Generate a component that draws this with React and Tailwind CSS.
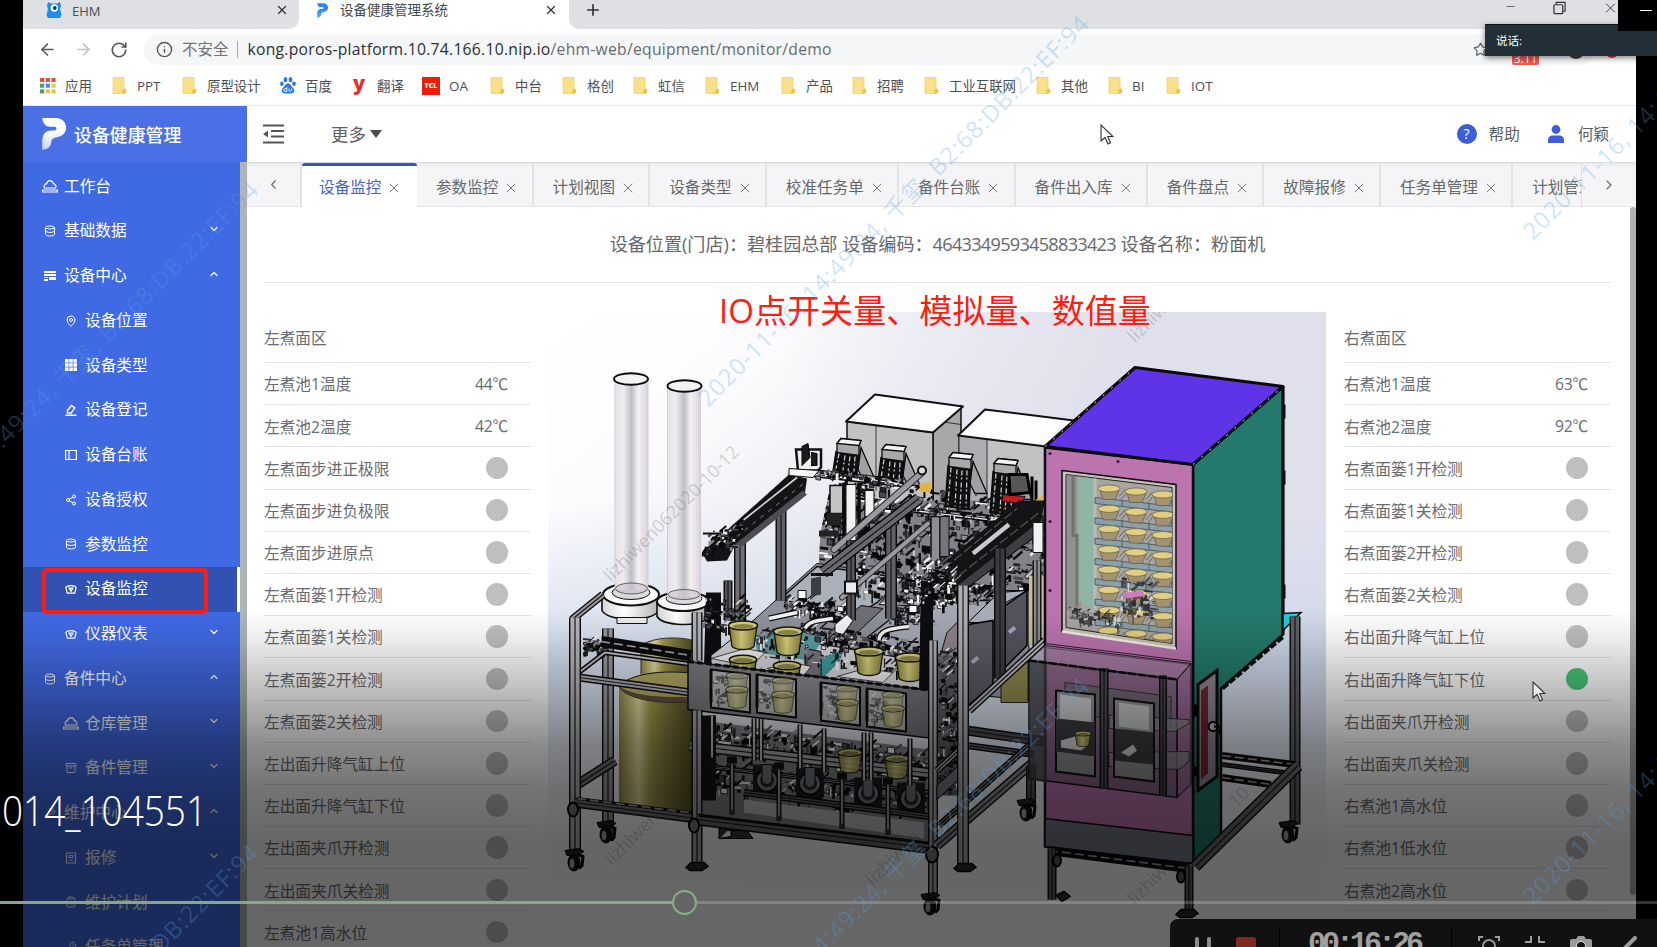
import React from "react";
import {
  ArrowLeft, ArrowRight, RotateCw, Info, X, Plus, Minus, Star, ChevronLeft, ChevronRight,
  ChevronDown, ChevronUp, MapPin, Database, Share2, Archive, ClipboardList, Wrench,
} from "lucide-react";

const SANS = "font-['Open_Sans','Noto_Sans_CJK_SC',sans-serif]";

function Logo({ className, id, from, to }) {
  return (
    <svg viewBox="0 0 24 32" className={className}>
      <defs>
        <linearGradient id={id} x1="0" y1="0" x2="0" y2="1">
          <stop offset="0.4" stopColor={from} />
          <stop offset="1" stopColor={to} />
        </linearGradient>
      </defs>
      <path fill={`url(#${id})`} d="M0.3 0H14a9.6 9.6 0 0 1 1 19.2c-4 .6-5.6 2.4-5.8 5.4C9 29 5 31.500 .3 32V23.500C.3 15.500 4 12.800 9.500 12.500h3c2.600 0 2.600-3.700 0-3.700H8C3.500 8.800 .8 5 .3 0z" />
    </svg>
  );
}

const Folder = () => (
  <svg viewBox="0 0 15 17" className="w-[15px] h-[17px] shrink-0">
    <path d="M1 0.500h11v10.500c2.500 1 2.500 4 .5 5.500H1z" fill="#fbe08a" stroke="#f3d06c" strokeWidth=".8" />
    <path d="M10.500 16.500c-1-2 0-4.500 1.800-4.500s2.400 3 .7 4.500z" fill="#eec04c" />
  </svg>
);
const Apps = () => (
  <svg viewBox="0 0 16 16" className="w-[16px] h-[16px] shrink-0">
    {["#e0523f", "#e0523f", "#e0523f", "#4e9e63", "#4b86e8", "#efc04a", "#4e9e63", "#efc04a", "#efc04a"].map((c, i) => (
      <rect key={i} x={(i % 3) * 5.700} y={Math.floor(i / 3) * 5.700} width="4.200" height="4" fill={c} />
    ))}
  </svg>
);
const Paw = () => (
  <svg viewBox="0 0 16 17" className="w-[16px] h-[17px] shrink-0" fill="#2b78e0">
    <ellipse cx="5.500" cy="2.700" rx="1.900" ry="2.600" />
    <ellipse cx="10.500" cy="2.700" rx="1.900" ry="2.600" />
    <ellipse cx="1.900" cy="6.800" rx="1.800" ry="2.300" />
    <ellipse cx="14" cy="6.800" rx="1.800" ry="2.300" />
    <path d="M8 6.500c2.500 0 3 2.500 4.800 4 2.500 2.500 1.500 6-1.800 6H5c-3.300 0-4.300-3.500-1.800-6C5 9 5.500 6.500 8 6.500z" />
    <path d="M6.800 10v4.500H5.200a1.300 1.300 0 1 1 0-2.800h1.600M9 11.500v2c0 1 2.500 1 2.500 0v-2" stroke="#fff" strokeWidth=".9" fill="none" />
  </svg>
);
const YIcon = () => <span className="w-[12px] -mt-[5px] text-center text-[20px] leading-[14px] font-black text-[#e0332c]">y</span>;
const Tcl = () => <span className="w-[18px] h-[18px] shrink-0 bg-[#f41b05] text-white text-[7px] font-black leading-[18px] text-center">TCL</span>;

const bookmarks = [
  ["应用", Apps, "w-[72px] gap-[9px]"], ["PPT", Folder, "w-[70px] gap-[10px]"], ["原型设计", Folder, "w-[98px] gap-[10px]"],
  ["百度", Paw, "w-[73px] gap-[9px]"], ["翻译", YIcon, "w-[69px] gap-[12px]"], ["OA", Tcl, "w-[68px] gap-[9px]"],
  ["中台", Folder, "w-[72px] gap-[10px]"], ["格创", Folder, "w-[71px] gap-[10px]"], ["虹信", Folder, "w-[72px] gap-[10px]"],
  ["EHM", Folder, "w-[76px] gap-[10px]"], ["产品", Folder, "w-[71px] gap-[10px]"], ["招聘", Folder, "w-[72px] gap-[10px]"],
  ["工业互联网", Folder, "w-[112px] gap-[10px]"], ["其他", Folder, "w-[72px] gap-[10px]"], ["BI", Folder, "w-[58px] gap-[9px]"],
  ["IOT", Folder, "w-[60px] gap-[10px]"],
];

function BrowserChrome() {
  return (
    <>
      <div className="flex h-[29px] bg-white shrink-0">
        <div className="w-[276px] bg-[#dfe0e4] rounded-br-[10px] flex items-start pl-[23px] pt-[2px]">
          <svg viewBox="0 0 16 16" className="w-[16px] h-[16px]">
            <path d="M2 0l3 1.500h6L14 0l1 4-1 3 1.500 6L14 16H2L.5 13 2 7 1 4z" fill="#1b8df0" />
            <circle cx="8.300" cy="6" r="3.700" fill="#fff" /><circle cx="8.800" cy="6" r="1.900" fill="#123a6b" />
          </svg>
          <span className="ml-[10px] text-[13px] leading-[18px] text-[#4a4d52]">EHM</span>
          <X className="ml-auto mr-[10px] mt-[1px] w-[14px] h-[14px] text-[#333]" strokeWidth={2.200} />
        </div>
        <div className="w-[270px] flex items-start pl-[18px]">
          <Logo id="tabLogo" from="#2f86ee" to="#56b2f5" className="w-[11px] h-[15px] mt-[3px]" />
          <span className="ml-[12px] text-[13.500px] leading-[21px] text-[#45484d]">设备健康管理系统</span>
          <X className="ml-auto mr-[11px] mt-[3px] w-[14px] h-[14px] text-[#333]" strokeWidth={2.200} />
        </div>
        <div className="flex-1 bg-[#dfe0e4] rounded-bl-[10px] flex items-start pl-[15px]">
          <Plus className="w-[18px] h-[18px] mt-[1px] text-[#333]" strokeWidth={2.200} />
          <Minus className="ml-auto w-[13px] h-[13px] text-[#555]" strokeWidth={1.500} />
          <svg viewBox="0 0 14 14" className="w-[13px] h-[14px] ml-[36px] mt-[1px]" fill="none" stroke="#333" strokeWidth="1.300">
            <rect x="1" y="3.500" width="9.500" height="9.500" rx="1" /><path d="M3.500 3V1H13v9.500h-2" />
          </svg>
          <X className="ml-[36px] mr-[17px] w-[17px] h-[16px] text-[#333]" strokeWidth={1.400} />
        </div>
      </div>
      <div className="flex items-center h-[41px] shrink-0 text-[#55585c]">
        <ArrowLeft className="ml-[15px] w-[19px] h-[19px]" strokeWidth={2} />
        <ArrowRight className="ml-[17px] w-[19px] h-[19px] text-[#c0c0c2]" strokeWidth={2} />
        <RotateCw className="ml-[17px] w-[18px] h-[18px]" strokeWidth={2.200} />
        <div className="ml-[16px] w-[1450px] h-[31px] rounded-full bg-[#f5f6f7] flex items-center pl-[12px]">
          <Info className="w-[17px] h-[17px]" strokeWidth={2} />
          <span className="ml-[9px] text-[15.500px] text-[#707377]">不安全</span>
          <span className="ml-[8px] w-px h-[17px] bg-[#aaa]" />
          <span className="ml-[10px] text-[15.700px] tracking-[0.260px] text-[#2c2f33] whitespace-nowrap">
            kong.poros-platform.10.74.166.10.nip.io<span className="text-[#686b70]">/ehm-web/equipment/monitor/demo</span>
          </span>
          <Star className="ml-auto mr-[106px] w-[15px] h-[15px]" strokeWidth={1.800} />
        </div>
      </div>
      <div className="flex items-center h-[36px] shrink-0 pl-[17px] pb-[3px] border-b border-[#e8e9eb]">
        {bookmarks.map(([t, Icon, cls]) => (
          <div key={t} className={`flex items-center shrink-0 whitespace-nowrap text-[13.400px] text-[#4c4f54] ${cls}`}><Icon />{t}</div>
        ))}
      </div>
    </>
  );
}

const sv = { fill: "none", stroke: "currentColor", strokeWidth: 1.200 };
const Bell = ({ className }) => (
  <svg viewBox="0 0 16 14" className={className} {...sv}><path d="M2.500 9C1 7 3 5 4.700 4.700 5.500 .5 10.500 .5 11.300 4.700 13 5 15 7 13.500 9zM.7 11h14.600v2H.7z" /></svg>
);
const Card = ({ className }) => (
  <svg viewBox="0 0 12 10" className={className} fill="currentColor"><path d="M0 0h12v2H0zM0 3h12v2H0zM0 6h4v1H0zM5 6h7v3H5zM0 8h4v2H0z" /></svg>
);
const GridI = ({ className }) => (
  <svg viewBox="0 0 12 12" className={className} fill="currentColor">
    {[0, 1, 2].map((r) => [0, 1, 2].map((c) => <rect key={r + "" + c} x={c * 4.200} y={r * 4.200} width="3.600" height="3.600" />))}
  </svg>
);
const Pen = ({ className }) => (
  <svg viewBox="0 0 12 12" className={className} {...sv} strokeWidth="1.400"><path d="M2.500 6.500L6.500 1.500l3.300 2.500-3.600 5H2.500zM.5 11.200h11" /></svg>
);
const Ledger = ({ className }) => (
  <svg viewBox="0 0 12 11" className={className} {...sv}><path d="M.6 1h10.800v9H.6zM4 1v9" /></svg>
);
const Meter = ({ className }) => (
  <svg viewBox="0 0 13 12" className={className} {...sv} strokeWidth="1.400"><path d="M1 4.500L2.500 10.500h8L12 4.500C11.500 1.500 1.500 1.500 1 4.500zM4.500 5h4L6.500 8.500z" /></svg>
);
const Doc = ({ className }) => (
  <svg viewBox="0 0 11 12" className={className} {...sv}><path d="M1 1h9v10H1zM3.500 3.500h4v2h-4zM3.500 8h4" /></svg>
);

const menu = [
  ["工作台", Bell, 0], ["基础数据", Database, 0, "d"], ["设备中心", Card, 0, "u"],
  ["设备位置", MapPin, 1], ["设备类型", GridI, 1], ["设备登记", Pen, 1], ["设备台账", Ledger, 1],
  ["设备授权", Share2, 1], ["参数监控", Database, 1], ["设备监控", Meter, 1, "", true],
  ["仪器仪表", Meter, 1, "d"], ["备件中心", Database, 0, "u"], ["仓库管理", Bell, 1, "d"],
  ["备件管理", Archive, 1, "d"], ["维护中心", Wrench, 0, "u"], ["报修", Doc, 1, "d"],
  ["维护计划", ClipboardList, 1], ["任务单管理", Wrench, 1],
];

function Sidebar() {
  return (
    <aside className="w-[224px] shrink-0 flex flex-col text-white">
      <div className="h-[56px] shrink-0 bg-[#4b70e6] flex items-center pl-[19px]">
        <Logo id="sideLogo" from="#ffffff" to="#c3d2fa" className="w-[24px] h-[32px]" />
        <span className="ml-[8px] mt-[3px] text-[17.900px] font-medium whitespace-nowrap">设备健康管理</span>
      </div>
      <div className="flex flex-1 min-h-0">
        <nav className="w-[217px] bg-[#4069e4] overflow-hidden pt-[2px]">
          {menu.map(([t, Icon, lvl, chev, on], i) => (
            <div key={i} className={`h-[44.750px] flex items-center pr-[20px] ${lvl ? "pl-[41px]" : "pl-[20px]"} ${on ? "bg-[#3252b3] border-r-[3px] border-white" : ""}`}>
              <span className="w-[14px] flex justify-center shrink-0">
                <Icon className={Icon === Bell ? "w-[16px] h-[14px] shrink-0" : "w-[12px] h-[12px]"} />
              </span>
              <span className="ml-[7px] text-[15.700px] whitespace-nowrap leading-none">{t}</span>
              {chev === "d" && <ChevronDown className="ml-auto w-[12px] h-[12px] -mt-[4px]" strokeWidth={2.500} />}
              {chev === "u" && <ChevronUp className="ml-auto w-[12px] h-[12px] -mt-[3px]" strokeWidth={2.500} />}
            </div>
          ))}
        </nav>
        <div className="w-[7px] bg-[#b1b3b4]" />
      </div>
    </aside>
  );
}

const tabs = [
  ["参数监控", "w-[116.600px]"], ["计划视图", "w-[116.600px]"], ["设备类型", "w-[116.600px]"], ["校准任务单", "w-[132.200px]"],
  ["备件台账", "w-[116.600px]"], ["备件出入库", "w-[132.200px]"], ["备件盘点", "w-[116.600px]"], ["故障报修", "w-[116.600px]"],
  ["任务单管理", "w-[132.200px]"], ["计划管理", "w-[116.600px]"],
];

function Header() {
  return (
    <>
      <div className="h-[56px] shrink-0 flex items-center pr-[27px] text-[#5d5f63]">
        <svg viewBox="0 0 22 20" className="ml-[16px] w-[22px] h-[20px]" fill="none" stroke="#555" strokeWidth="1.900">
          <path d="M0 1.500h21M8 7h13M8 12.500h13M0 18.500h21" /><path d="M0 10l5-3.500v7z" fill="#555" stroke="none" />
        </svg>
        <span className="ml-[46px] mt-[1px] text-[17.500px]">更多</span>
        <svg viewBox="0 0 12 8" className="ml-[4px] w-[12px] h-[8px]"><path d="M0 0h12L6 8z" fill="#4c4e52" /></svg>
        <span className="ml-auto w-[20px] h-[20px] rounded-full bg-[#3b5fdc] text-white text-[14px] leading-[20px] text-center">?</span>
        <span className="ml-[12px] mt-[1px] text-[15.600px]">帮助</span>
        <svg viewBox="0 0 16 18" className="ml-[28px] w-[16px] h-[18px]" fill="#3b5fdc"><circle cx="8" cy="4.500" r="4.400" /><path d="M0 18v-3c0-3 2-4.500 4.500-4.500h7C14 10.500 16 12 16 15v3z" /></svg>
        <span className="ml-[14px] mt-[1px] text-[15.600px]">何颖</span>
      </div>
      <div className="h-[45px] shrink-0 flex bg-[#f5f5f7] border-t border-[#dcdde0] text-[15.600px] text-[#66686c] shadow-[inset_0_2px_3px_rgba(0,0,0,0.050)]">
        <div className="w-[55px] border-r-2 border-b border-[#e2e3e6] flex items-center justify-center"><ChevronLeft className="w-[15px] h-[15px]" strokeWidth={1.700} /></div>
        <div className="flex w-[1280px] overflow-hidden border-r border-[#dcdde0]">
          <div className="w-[115px] shrink-0 bg-white border-t-[3px] border-[#3655c4] rounded-t-[3px] flex items-center pl-[17px] pt-[2px] text-[#4361cf]">
            设备监控<X className="ml-[5px] mt-[1px] w-[16px] h-[16px] text-[#77797c]" strokeWidth={1.500} />
          </div>
          {tabs.map(([t, w]) => (
            <div key={t} className={`shrink-0 flex items-center pl-[19px] pt-[6px] border-r-2 border-b border-[#e2e3e6] whitespace-nowrap ${w}`}>
              {t}<X className="ml-[5px] mt-[1px] w-[16px] h-[16px] text-[#77797c] shrink-0" strokeWidth={1.500} />
            </div>
          ))}
        </div>
        <div className="flex-1 border-b border-[#e2e3e6] flex items-center justify-center"><ChevronRight className="w-[16px] h-[16px]" strokeWidth={1.700} /></div>
      </div>
    </>
  );
}

const left = [
  ["左煮池1温度", "44℃"], ["左煮池2温度", "42℃"], ["左煮面步进正极限"], ["左煮面步进负极限"], ["左煮面步进原点"],
  ["左煮面篓1开检测"], ["左煮面篓1关检测"], ["左煮面篓2开检测"], ["左煮面篓2关检测"], ["左出面升降气缸上位"],
  ["左出面升降气缸下位"], ["左出面夹爪开检测"], ["左出面夹爪关检测"], ["左煮池1高水位"],
];
const right = [
  ["右煮池1温度", "63℃"], ["右煮池2温度", "92℃"], ["右煮面篓1开检测"], ["右煮面篓1关检测"], ["右煮面篓2开检测"],
  ["右煮面篓2关检测"], ["右出面升降气缸上位"], ["右出面升降气缸下位", null, true], ["右出面夹爪开检测"], ["右出面夹爪关检测"],
  ["右煮池1高水位"], ["右煮池1低水位"], ["右煮池2高水位"],
];

function Points({ title, rows }) {
  return (
    <section className="w-[267px] shrink-0 text-[15.700px] text-[#696b70]">
      <div className="h-[80px] pt-[33px] flex items-center border-b border-[#e3e4e7]">{title}</div>
      {rows.map(([t, v, on]) => (
        <div key={t} className="h-[42.190px] flex items-center justify-between pr-[23px] border-b border-[#e3e4e7]">
          <span className="mt-[3px]">{t}</span>
          {v ? <span className="mt-[2px] tracking-[-0.200px]">{v}</span> : <span className={`w-[22.500px] h-[22.500px] rounded-full ${on ? "bg-[#47c878]" : "bg-[#bfbfbf]"}`} />}
        </div>
      ))}
    </section>
  );
}

/* ---------- machine drawing ---------- */
const SHADES = ["#0a0a0c", "#0a0a0c", "#0a0a0c", "#26262a", "#47474d", "#8c8c93", "#f2f2f4"];
function makeRand(seed) {
  let s = seed;
  return () => {
    s = (s * 16807) % 2147483647;
    return s / 2147483647;
  };
}
// Small mechanical parts scattered in a sheared region with origin (x, y), width w, height h and slope k.
function Parts({ x, y, w, h, k = 0.130, n, seed, size = 7 }) {
  const r = makeRand(seed);
  const out = [];
  for (let i = 0; i < n; i++) {
    const dx = r() * w;
    const px = x + dx;
    const py = y + dx * k + r() * h;
    const kind = Math.floor(r() * 4);
    const L = 2 + r() * size;
    const c = SHADES[Math.floor(r() * SHADES.length)];
    if (kind === 0) out.push(<path key={i} d={`M${px} ${py}l${L} ${L * 0.130}`} stroke={c} strokeWidth={1 + r() * 2} />);
    else if (kind === 1) out.push(<path key={i} d={`M${px} ${py}l${L * 0.800} ${-L * 0.700}`} stroke={c} strokeWidth={1 + r() * 1.600} />);
    else if (kind === 2) out.push(<path key={i} d={`M${px} ${py}v${L}`} stroke={c} strokeWidth={1 + r() * 2} />);
    else out.push(<path key={i} d={`M${px} ${py}l${L * 0.600} ${L * 0.080}v${L * 0.500}l${-L * 0.600} ${-L * 0.080}z`} fill={c} stroke="#0a0a0c" strokeWidth=".8" />);
  }
  return <g fill="none">{out}</g>;
}
// Extruded bar: black outline, coloured core and a thin dark seam.
function Bar({ p, w = 8, c = "#85858b", seam = true }) {
  return (
    <g fill="none" strokeLinejoin="round">
      <path d={p} stroke="#0a0a0c" strokeWidth={w} />
      <path d={p} stroke={c} strokeWidth={w - 2.800} />
      {seam && <path d={p} stroke="#19191c" strokeWidth="1.200" />}
    </g>
  );
}
function Rod({ p, w = 6, c = "#9a9aa0" }) {
  return (
    <g fill="none" strokeLinecap="round">
      <path d={p} stroke="#2a2a2d" strokeWidth={w} />
      <path d={p} stroke={c} strokeWidth={w - 2} />
    </g>
  );
}
function Chain({ p, w = 8 }) {
  return (
    <g fill="none">
      <path d={p} stroke="#0a0a0c" strokeWidth={w} />
      <path d={p} stroke="#a2a2a8" strokeWidth="1.600" strokeDasharray="9 4" />
    </g>
  );
}
function Caster({ x, y }) {
  return (
    <g>
      <path d={`M${x - 9} ${y - 12}l14 -2 5 3-8 4h-9z`} fill="#222" stroke="#000" />
      <ellipse cx={x} cy={y} rx="6.500" ry="9" fill="#0c0c0e" />
      <ellipse cx={x - 2} cy={y + 1} rx="2.800" ry="5" fill="#aaa" stroke="#222" />
      <path d={`M${x + 4} ${y - 8}l5 2-1 9-3 3`} fill="none" stroke="#000" strokeWidth="3" />
    </g>
  );
}
function Foot({ x, y }) {
  return <path d={`M${x - 10} ${y}l5-5h13l4 4-6 4h-12z`} fill="#2a2a2e" stroke="#000" strokeWidth="1.500" />;
}
function Cup({ x, y, s = 1, o = 1 }) {
  return (
    <g transform={`translate(${x} ${y}) scale(${s})`} opacity={o}>
      <path d="M-14 0L-11 21C-6 25 6 25 11 21L14 0z" fill="url(#cup)" stroke="#15150a" strokeWidth="1.300" />
      <ellipse rx="14.500" ry="4.500" fill="#d5cf84" stroke="#15150a" strokeWidth="1.500" />
      <ellipse cy="1" rx="10.500" ry="2.600" fill="#8f8948" />
    </g>
  );
}
// Dispensing head: light cap over a black mesh body with a rear gusset.
function Head({ x, y, h = 26 }) {
  const b = y + 14 + h;
  return (
    <g stroke="#0a0a0c" strokeWidth="1.300">
      <path d={`M${x + 24} ${y + 8}L${x + 38} ${y + 40}h-12l-5-10z`} fill="#a2a0a5" />
      <path d={`M${x - 1} ${y + 12}L${x + 22} ${y + 14}L${x + 20} ${b}L${x - 4} ${b - 3}z`} fill="#101012" />
      <path d={`M${x} ${y + 4}l4-5 20 2-2 5v10l-22-3z`} fill="#a9a9ac" />
      <path d={`M${x} ${y + 4}l4-5 20 2-2 5z`} fill="#f4f4f5" />
      <path d={`M${x + 2} ${y + 14}L${x - 1} ${b - 5}M${x + 8} ${y + 16}L${x + 6} ${b - 3}M${x + 13} ${y + 17}L${x + 11} ${b - 2}M${x + 18} ${y + 17}L${x + 17} ${b - 2}`} fill="none" stroke="#c9c9cc" strokeWidth="1.300" strokeDasharray="5 2 2 3" />
    </g>
  );
}

const shelfRows = [0, 1, 2, 3, 4, 5, 6, 7];

function Machine() {
  return (
    <svg viewBox="549 311.500 778 640" className="w-[778px] h-[640px] ml-[17px] mr-[18px] mt-[29px] shrink-0" strokeLinecap="butt">
      <defs>
        <linearGradient id="bg" x1="0" y1="0" x2="0.900" y2="0.900">
          <stop offset="0" stopColor="#ffffff" /><stop offset="0.200" stopColor="#fbfbfd" />
          <stop offset="0.450" stopColor="#e3e6ee" /><stop offset="1" stopColor="#d9dce8" />
        </linearGradient>
        <linearGradient id="low" x1="0" y1="0" x2="0" y2="1">
          <stop offset="0.300" stopColor="#c4d2e8" stopOpacity="0" /><stop offset="0.550" stopColor="#c4d2e8" stopOpacity="0.600" />
          <stop offset="0.800" stopColor="#ffffff" stopOpacity="0.900" /><stop offset="1" stopColor="#ffffff" />
        </linearGradient>
        <linearGradient id="tr" x1="0" y1="0" x2="1" y2="0">
          <stop offset="0.300" stopColor="#e0e0ec" stopOpacity="0" /><stop offset="0.800" stopColor="#e0e0ec" />
        </linearGradient>
        <linearGradient id="tube" x1="0" y1="0" x2="1" y2="0">
          <stop offset="0" stopColor="#e7e2e8" /><stop offset="0.250" stopColor="#efedf0" /><stop offset="0.500" stopColor="#bfbfc3" />
          <stop offset="0.700" stopColor="#f2f2f4" /><stop offset="1" stopColor="#dcd2dc" />
        </linearGradient>
        <linearGradient id="drum" x1="0" y1="0" x2="1" y2="0">
          <stop offset="0" stopColor="#8f8744" /><stop offset="0.260" stopColor="#e2dba0" /><stop offset="0.420" stopColor="#a49c4c" />
          <stop offset="0.600" stopColor="#857d3e" /><stop offset="1" stopColor="#4e4a22" />
        </linearGradient>
        <linearGradient id="cup" x1="0" y1="0" x2="1" y2="0">
          <stop offset="0" stopColor="#857f3a" /><stop offset="0.450" stopColor="#d8d07c" /><stop offset="1" stopColor="#847d38" />
        </linearGradient>
        <linearGradient id="bowl" x1="0" y1="0" x2="1" y2="0">
          <stop offset="0" stopColor="#d6d6d8" /><stop offset="0.400" stopColor="#ffffff" /><stop offset="1" stopColor="#b4b4b8" />
        </linearGradient>
        <linearGradient id="panel" x1="0" y1="0" x2="1" y2="0">
          <stop offset="0" stopColor="#76767c" /><stop offset="0.500" stopColor="#88888e" /><stop offset="1" stopColor="#6e6e76" />
        </linearGradient>
        <clipPath id="rear"><path d="M833 478L905 483 1046 505V610L960 612 870 600 818 572 822 530z" /></clipPath>
        <clipPath id="deck"><path d="M720 650L752 618 818 562 1030 590V700L936 690z" /></clipPath>
      </defs>
      <rect x="549" y="311" width="778" height="641" fill="url(#bg)" />
      <rect x="549" y="311" width="778" height="300" fill="url(#tr)" />
      <rect x="549" y="311" width="778" height="641" fill="url(#low)" />

      {/* rear covers */}
      <g stroke="#111" strokeWidth="1.500" strokeLinejoin="round">
        <path d="M934 432L962 405V520H934z" fill="#a9a7aa" />
        <path d="M848 421L934 432V520L848 490z" fill="#c2c2c3" />
        <path d="M877 425V490M934 420l28 4" strokeWidth=".8" />
        <path d="M876 394L964 406 934 432 847 421z" fill="#fdfdfd" strokeWidth="2" />
        <path d="M960 434L1047 446V560L960 540z" fill="#c2c2c3" strokeWidth="1" />
        <path d="M960 434l28 4V540l-28-10z" fill="#aeacb0" strokeWidth=".8" />
        <path d="M986 409L1075 420 1047 446 959 435z" fill="#fdfdfd" strokeWidth="2" />
      </g>

      {/* rear equipment */}
      <g clipPath="url(#rear)">
        <path d="M820 500H1046V620H820z" fill="#838288" />
        <Parts x={820} y={478} w={228} h={120} k={0.080} n={900} seed={77} size={11} />
      </g>

      {/* tank deck */}
      <path d="M752 622L818 563 905 575 880 604 930 606 990 590 1030 590V700L936 690 720 655z" fill="#8f929c" stroke="#111" />
      <path d="M782 598L818 566 852 570 905 578 878 602 850 620z" fill="#a9b0ba" stroke="#111" strokeWidth="1.500" />
      <path d="M868 637L915 600 1000 600 965 640 930 660z" fill="#a3a8b4" stroke="#111" strokeWidth="1.500" />
      <path d="M862 605L884 608 850 640 830 632z" fill="#6f6d75" stroke="#111" />
      <g clipPath="url(#deck)">
        <Parts x={785} y={596} w={60} h={18} k={0.100} n={120} seed={301} size={10} />
        <Parts x={852} y={560} w={110} h={34} k={0.100} n={230} seed={31} size={9} />
        <Parts x={890} y={606} w={40} h={16} k={0.050} n={70} seed={33} size={9} />
        <Parts x={930} y={575} w={70} h={30} k={0} n={150} seed={34} size={9} />
        <Parts x={800} y={622} w={130} h={28} k={0.150} n={220} seed={35} size={10} />
        <path d="M812 578l10-2v18l-10 2z" fill="#3b3b42" />
        <path d="M799 590h8v8h-8zM910 605h8v7h-8z" fill="#f6f6f7" stroke="#111" />
      </g>

      <Head x={838} y={439} h={20} />
      <Head x={883} y={445} h={24} />
      <Head x={950} y={453} h={42} />
      <Head x={995} y={459} h={42} />
      <path d="M1004 494l22 2-3 7-20-2z" fill="#c01c24" stroke="#111" />
      <path d="M1010 474h18l3 18-20 2z" fill="#55555a" stroke="#000" strokeWidth="3" />
      <path d="M1033 476v34M1037 480v26" stroke="#000" strokeWidth="3" />
      <path d="M920 484l12-3v10l-10 1zM1036 500l8-6v8z" fill="#e0b545" />

      {/* columns under the beams */}
      <path d="M831 485h13v28h-13z" fill="#c4c4c6" stroke="#111" strokeWidth="1.500" />
      <path d="M828 513h14v12h-14zM820 530h20v6h-20z" fill="#222" />
      <path d="M847 484h10v56h-10zM866 490h9v26h-9z" fill="#f2f2f3" stroke="#111" />
      <path d="M860 482v58M845 482v56" stroke="#0b0b0d" strokeWidth="3.500" />

      {/* cross beams */}
      <Bar p="M790 471L905 484" w={6} c="#f0f0f2" seam={false} />
      <Chain p="M818 471L900 480" w={4} />
      <Bar p="M884 505L1000 519" w={7} c="#ececee" seam={false} />
      <Chain p="M900 506L990 517" w={3} />
      <Parts x={812} y={467} w={95} h={8} n={80} seed={12} size={6} />
      <Parts x={890} y={502} w={110} h={8} n={80} seed={19} size={6} />

      {/* left gantry */}
      <Bar p="M782 506V600" w={11} c="#5e5e64" />
      <Bar p="M741 540V625" w={12} c="#6e6e74" />
      <path d="M703 552L790 474 808 478 806 492 736 545 728 560 708 561z" fill="#141416" />
      <path d="M730 531L798 477" stroke="#d9d9de" strokeWidth="1.600" fill="none" />
      <path d="M738 546L806 492" stroke="#4d4d53" strokeWidth="6" fill="none" />
      <path d="M738 536L806 482" stroke="#85858b" strokeWidth="1" strokeDasharray="4 6" fill="none" />
      <Parts x={706} y={532} w={34} h={22} k={-0.300} n={75} seed={5} size={7} />
      <path d="M704 533h18M704 556c-2-7 8-12 16-10" stroke="#111" strokeWidth="2" fill="none" />
      <path d="M797 449h25v18l-3 3h-20z" fill="#eee" stroke="#111" strokeWidth="2.500" />
      <path d="M803 446l6-3 2 14-8 8zM812 452l6 1v12h-6" fill="#1b1b1e" stroke="#000" />
      <path d="M790 468l30 2-6 7-24-2z" fill="#f6f6f7" stroke="#111" />

      {/* middle gantry */}
      <Rod p="M835 549L923 472" w={7} />
      <circle cx="923" cy="470" r="4" fill="#ddd" stroke="#111" strokeWidth="2" />
      <Bar p="M892 524V618" w={12} c="#5f5f65" />
      <Bar p="M852 540V620" w={10} c="#55555b" />
      <Bar p="M824 572L920 498" w={12} c="#68686e" />
      <path d="M812 574h22" stroke="#111" strokeWidth="3" />
      <Rod p="M843 597L929 523" w={6} />
      <path d="M846 581h12v12h-12z" fill="#ececee" stroke="#111" strokeWidth="2" />
      <path d="M932 516h9v46h-9z" fill="#8f8d93" stroke="#111" strokeWidth="1.500" />
      <path d="M941 516h9v40h-9z" fill="#77727b" stroke="#111" />

      {/* right gantry */}
      <path d="M950 590L1044 515V530L962 592z" fill="#3d3d42" stroke="#000" />
      <path d="M1046 500L1042 520 955 588 926 592 924 577 940 566 1020 500z" fill="#141416" />
      <path d="M974 553L1010 524" stroke="#c9c9cf" strokeWidth="4.500" />
      <path d="M945 568L1018 508M960 575L1040 512" stroke="#55555a" strokeWidth="1.200" strokeDasharray="10 3" />
      <Parts x={915} y={560} w={40} h={28} k={0} n={90} seed={55} size={8} />
      <path d="M1034 522h10v30h-10z" fill="#f2f2f4" stroke="#111" />
      <Rod p="M1028 576L1044 560" w={5} c="#b9b9bd" />

      {/* dark cabinets beside the tanks */}
      <path d="M1030 575h16v70h-16z" fill="#c3bf96" />
      <path d="M969 622L1000 592 1028 590 1000 606 998 622z" fill="#a9adbb" stroke="#000" />
      <path d="M969 624L994 620V684L969 705z" fill="#5b5963" stroke="#000" strokeWidth="1.500" />
      <path d="M1005 606L1028 590V645L1005 668z" fill="#55535d" stroke="#000" strokeWidth="1.500" />
      <path d="M948 632L968 612V640L940 660z" fill="#8c828c" stroke="#111" />
      <Bar p="M1001 548V678" w={12} c="#3c3c40" />
      <Bar p="M1038 560V650" w={9} c="#8a8a8f" />
      <path d="M973 662l6-5M1010 632l6-5" stroke="#a6a6bb" strokeWidth="4" />
      <path d="M1002 684l24-22h3v40h-27z" fill="#8c874c" stroke="#222" />

      {/* tubes */}
      <g>
        <path d="M603 596v14a29 11 0 0 0 57 0v-14z" fill="url(#bowl)" stroke="#111" strokeWidth="1.600" />
        <ellipse cx="632" cy="594" rx="28" ry="11" fill="#fbfbfc" stroke="#111" strokeWidth="2" />
        <ellipse cx="632" cy="592" rx="19" ry="7" fill="#d9d9dc" stroke="#111" />
        <path d="M618 617h30v6h-30z" fill="#ececee" stroke="#111" />
        <rect x="616" y="379" width="33" height="211" fill="url(#tube)" stroke="#cfc2d2" strokeWidth=".8" />
        <ellipse cx="632.500" cy="588" rx="16" ry="5.500" fill="#c9c2cb" fillOpacity=".6" stroke="#444" strokeWidth=".8" />
        <ellipse cx="632" cy="378.500" rx="17" ry="5.800" fill="#f3f3f4" stroke="#0c0c0e" strokeWidth="1.900" />
        <path d="M658 602v14a27 10 0 0 0 48 4v-18z" fill="url(#bowl)" stroke="#111" strokeWidth="1.600" />
        <ellipse cx="684" cy="601" rx="26" ry="9.500" fill="#fbfbfc" stroke="#111" strokeWidth="2" />
        <ellipse cx="685" cy="598" rx="18" ry="6" fill="#d9d9dc" stroke="#111" />
        <rect x="668.500" y="386" width="33" height="211" fill="url(#tube)" stroke="#cfc2d2" strokeWidth=".8" />
        <ellipse cx="685" cy="594" rx="16" ry="5" fill="#c9c2cb" fillOpacity=".6" stroke="#444" strokeWidth=".8" />
        <ellipse cx="685.500" cy="385.500" rx="17" ry="5.800" fill="#f3f3f4" stroke="#0c0c0e" strokeWidth="1.900" />
      </g>

      {/* drums and left frame */}
      <path d="M642 645c12-9 40-9 52-5v70h-52z" fill="url(#drum)" stroke="#333" />
      <Bar p="M609 628V840" w={12} c="#97979c" />
      <path d="M620 686C630 672 665 668 695 674V812L620 802z" fill="url(#drum)" />
      <path d="M620 686c8 14 45 18 75 15v-28c-30-4-65 0-75 13z" fill="#b0a761" stroke="#1a1a10" />
      <path d="M620 686c8 14 45 18 75 15v-5c-40 2-62-2-75-10z" fill="#5e4e3c" />
      <Chain p="M602 641L692 655" w={11} />
      <Parts x={584} y={638} w={22} h={14} n={55} seed={61} size={6} />
      <Bar p="M580 672L606 652 694 664" w={5} c="#b9b9bd" seam={false} />
      <Bar p="M580 677L692 692" w={8} c="#a9a9ae" />
      <Bar p="M573 619L604 594" w={8} c="#9c9ca1" />
      <Bar p="M577 785L616 760" w={10} c="#737378" />
      <Bar p="M576 617V850" w={12} c="#b4b4b9" />
      <Bar p="M575 802L698 818" w={10} c="#6f6f74" />
      <Chain p="M578 798L698 813" w={3} />

      {/* tanks and baskets */}
      <path d="M707 592h15v74h-17z" fill="#0d0d0f" />
      <Bar p="M729 580V620" w={9} c="#55555b" />
      <Parts x={705} y={594} w={42} h={34} n={100} seed={14} size={7} />
      <path d="M712 655l28-22 90 12 70 12 30 6 18 30-30-3-206-25z" fill="#d4d4d9" stroke="#111" />
      <path d="M756 638l20-8 50 6-16 24-52-8z" fill="#5a9da0" />
      <path d="M822 657l22-6-4 10-18 18z" fill="#3d9aa0" stroke="#1d5a60" strokeDasharray="2 2" />
      <path d="M806 648l16 3v26l-16-3z" fill="#77757d" stroke="#111" />
      <Parts x={758} y={628} w={170} h={28} n={190} seed={41} size={8} />
      <path d="M770 618l28-6M806 628c4-8 14-8 28-10M880 640c0-10 10-12 30-14" stroke="#111" strokeWidth="6" fill="none" />
      <path d="M770 618l28-6M806 628c4-8 14-8 28-10M880 640c0-10 10-12 30-14" stroke="#f4f4f6" strokeWidth="3.500" fill="none" />
      <path d="M836 624l12-10 6 6-10 14-8-2z" fill="#f4f4f6" stroke="#111" />
      <path d="M712 658l34-10 20 4-14 14zM768 668l26-6 18 4-8 10zM838 676l28-8 28 4-10 10z" fill="#efeff1" stroke="#222" strokeWidth=".8" />
      <Cup x={744} y={659} s={0.950} />
      <Cup x={788} y={665} s={0.950} />
      <Cup x={744} y={625} />
      <Cup x={789} y={631} />
      <Cup x={870} y={651} />
      <Cup x={911} y={657} />
      <path d="M922 580h12v110h-14z" fill="#0d0d0f" />
      <Parts x={915} y={575} w={20} h={26} k={0} n={50} seed={87} size={7} />
      <path d="M938 655h20v140h-20z" fill="#5c5a62" />
      <Parts x={938} y={650} w={22} h={140} k={0} n={170} seed={88} size={8} />

      {/* lower internals */}
      <path d="M700 712L932 742V845L700 818z" fill="#68686d" opacity=".85" />
      <path d="M702 716L930 745" stroke="#dcdce0" strokeWidth="8" />
      <Parts x={700} y={722} w={232} h={26} n={330} seed={23} size={10} />
      <Bar p="M691 745L933 773" w={11} c="#a4a4a9" />
      <Parts x={700} y={760} w={230} h={28} n={280} seed={27} size={10} />
      <Cup x={851} y={752} s={0.850} o={0.850} />
      <Cup x={898} y={758} s={0.850} o={0.850} />
      <Bar p="M700 765L930 792" w={5} c="#b8b8bc" />
      {[[768, 780], [811, 783], [869, 793], [912, 798]].map(([x, y]) => (
        <g key={x}>
          <rect x={x - 14} y={y - 16} width="28" height="30" fill="#1b1b1e" />
          <circle cx={x} cy={y} r="11" fill="#77787e" stroke="#0c0c0e" strokeWidth="2" />
          <circle cx={x} cy={y} r="7" fill="#2a2b30" />
          <path d={`M${x - 5} ${y - 16}h10v15a5 5 0 0 1-10 0z`} fill="#6b757c" stroke="#111" />
        </g>
      ))}
      <Bar p="M745 792L930 816" w={7} c="#5d5d62" />
      <path d="M745 799L925 822 925 838 745 812z" fill="#bcbcbf" />
      <path d="M703 715h14v85h-14z" fill="#121214" />
      {[[713, 715, 757], [755, 718, 760], [762, 718, 760], [801, 724, 768], [825, 728, 772], [865, 732, 780], [872, 732, 780], [911, 738, 785]].map(([x, a, b]) => (
        <Bar key={x} p={`M${x} ${a}V${b}`} w={5} c="#b9b9bd" seam={false} />
      ))}
      {[[733, 756, 812], [780, 762, 818], [843, 772, 826], [889, 777, 832]].map(([x, a, b]) => (
        <g key={x}>
          <Bar p={`M${x} ${a}V${b}`} w={5} c="#98989d" seam={false} />
          <path d={`M${x - 5} ${a}h10v7h-10z`} fill="#111" />
          <circle cx={x} cy={b} r="3" fill="#333" />
        </g>
      ))}
      <path d="M720 822l12-2v16l-12 2zM720 838h34l-6-8h-20z" fill="#38383c" stroke="#000" />

      {/* front panel */}
      <path d="M689 661L934 690V738L689 709z" fill="url(#panel)" stroke="#0c0c0e" strokeWidth="1.500" />
      {[[712, 669], [758, 674], [822, 682], [868, 688]].map(([x, y], i) => (
        <g key={x}>
          <path d={`M${x} ${y}l39 5v38l-39-5z`} fill="#b1b1b0" stroke="#0c0c0e" strokeWidth="2" />
          <g opacity=".55"><Parts x={x + 2} y={y + 4} w={14} h={28} n={26} seed={200 + i} size={5} /></g>
          <Cup x={x + 26} y={y + 6} s={0.750} o={0.450} />
          <Cup x={x + 26} y={y + 20} s={0.780} o={0.600} />
          <path d={`M${x} ${y}v33`} stroke="#0c0c0e" strokeWidth="3" />
        </g>
      ))}
      <path d="M689 661L934 690" stroke="#0c0c0e" strokeWidth="3" strokeDasharray="6 3" />

      {/* front frame */}
      <Bar p="M698 612V660" w={11} c="#b2b2b7" />
      <Bar p="M698 710V862" w={11} c="#a3a3a8" />
      <Bar p="M698 819L935 848" w={12} c="#66666b" />
      <path d="M700 815L933 843" stroke="#0c0c0e" strokeWidth="2.500" />
      <Bar p="M934 640V895" w={10} c="#b0b0b5" />
      <Foot x={697} y={867} />

      {/* side frame */}
      <Bar p="M938 770L965 745" w={7} c="#b9b9bd" />
      <path d="M938 785l28-26v14l-28 26z" fill="#7b7880" stroke="#000" />
      <Bar p="M968 730L1045 741" w={10} c="#4d4d52" />
      <Bar p="M968 745L1035 754" w={7} c="#5d5d62" />
      <Bar p="M970 710L1046 640" w={8} c="#b9b9bd" />
      <Bar p="M938 845L1034 762" w={10} c="#8c8c91" />
      <Bar p="M940 825L1030 745" w={7} c="#77777c" />
      <Bar p="M964 585V865" w={12} c="#adadb2" />
      <Foot x={965} y={868} />
      <Bar p="M1032 765V805" w={10} c="#55555a" />

      {/* noodle cabinet */}
      <g stroke="#0b0b0d" strokeLinejoin="round">
        <path d="M1194 464L1284 386V634L1222 688V840L1194 863z" fill="#23796b" strokeWidth="2.500" />
        <path d="M1046 447L1194 464V863L1046 846z" fill="#bb74ae" strokeWidth="2.500" />
        <path d="M1046 818L1194 835V863L1046 846z" fill="#757987" strokeWidth="1.500" />
        <path d="M1136 367L1284 386 1194 464 1046 446z" fill="#5f33e6" strokeWidth="3" />
      </g>
      <path d="M1284 386V634M1285 404v14M1285 470v14M1285 584v14" stroke="#0b0b0d" strokeWidth="3" />
      <path d="M1194 464L1284 386M1046 446L1136 367" stroke="#f5f5f8" strokeWidth="1" strokeDasharray="2 9" />
      {[[1051, 453], [1119, 461], [1051, 521], [1051, 590]].map(([x, y]) => <circle key={y} cx={x} cy={y} r="1.500" fill="#3d1038" />)}
      <path d="M1063 470L1177 484V648L1063 631z" fill="#c7c3bb" stroke="#0b0b0d" strokeWidth="1.500" />
      <path d="M1067 474L1173 487V643L1067 627z" fill="#a8a6a2" stroke="#222" />
      <path d="M1068 475L1078 476V612L1068 610z" fill="#8f918f" />
      <path d="M1080 476L1094 478V608L1080 602z" fill="#8fb5a5" />
      <path d="M1074 475v60h4v72" stroke="#70736f" strokeWidth="3" fill="none" />
      <path d="M1096 478v132" stroke="#bdbbb5" strokeWidth="3" />
      <clipPath id="win"><path d="M1067 474L1173 487V643L1067 627z" /></clipPath>
      <g clipPath="url(#win)">
        {shelfRows.map((r) =>
          [0, 1, 2].map((c) => {
            const x = 1110 + c * 27;
            const y = 488 + r * 20.300 + c * 3;
            return (
              <g key={r + "-" + c}>
                <path d={`M${x - 14} ${y + 9}l28 3v6l-28-3z`} fill="#8ba0a8" stroke="#4c585e" strokeWidth=".9" />
                <path d={`M${x - 9} ${y + 2}l3 9h12l4-9z`} fill="#a39273" stroke="#66604f" strokeWidth=".8" />
                <ellipse cx={x} cy={y} rx="11" ry="3.600" fill="#e3cf84" stroke="#77704c" strokeWidth=".9" />
                <path d={`M${x + 10} ${y + 8}l6-7M${x + 12} ${y + 11}l5-6`} stroke="#5f686c" strokeWidth="1" />
              </g>
            );
          })
        )}
        <g opacity=".7"><Parts x={1122} y={578} w={32} h={38} n={80} seed={44} size={8} /></g>
        <path d="M1124 592l20-1 2 4-18 3z" fill="#d678c0" />
        <g opacity=".7"><Parts x={1070} y={606} w={50} h={12} n={60} seed={46} size={8} /></g>
      </g>
      <path d="M1063 631L1177 648" stroke="#f3efe2" strokeWidth="2.500" />
      <path d="M1046 643L1192 661M1046 647L1192 664" stroke="#3c1a38" strokeWidth="1.200" />

      {/* glass hood */}
      <path d="M1046 645L1192 663 1178 679 1030 660z" fill="#8d7f95" fillOpacity=".5" stroke="#222" />
      <path d="M1178 679L1192 663V784L1178 797z" fill="#6d5f78" fillOpacity=".45" stroke="#111" />
      <path d="M1030 660L1178 679V797L1030 778z" fill="#55525e" fillOpacity=".5" stroke="#111" strokeWidth="1.500" />
      <path d="M1030 660h18v122l-18-3z" fill="#3a3a40" fillOpacity=".7" />
      <path d="M1066 682l106 14v30l-106-14z" fill="#66656d" fillOpacity=".75" stroke="#222" strokeWidth=".8" />
      <path d="M1110 715l80 4v4l-14 8-66-3zM1110 752l80-1v10l-10 8-70-3z" fill="#8a8990" fillOpacity=".75" stroke="#222" strokeWidth=".8" />
      <path d="M1057 690l39 4v82l-39-5z" fill="#8e8f92" stroke="#111" strokeWidth="2" />
      <path d="M1061 694l31 4v24l-31-4z" fill="#cbcccd" />
      <path d="M1057 718l39 4v34l-39-5z" fill="#3b3a3d" />
      <path d="M1062 740l14-4 14 8-8 6-20-3z" fill="#d9d9dc" />
      <Cup x={1084} y={733} s={0.550} />
      <path d="M1115 698l40 5v78l-40-5z" fill="#8e8f92" stroke="#111" strokeWidth="2" />
      <path d="M1120 702l30 4v24l-30-4z" fill="#c3c4c6" />
      <path d="M1116 728l38 4v32l-38-4z" fill="#3b3a3d" />
      <path d="M1122 752l12-8 4 6-8 6z" fill="#cfcfd3" />
      <Bar p="M1105 668V788" w={9} c="#48474e" />
      <Bar p="M1164 675V795" w={8} c="#48474e" />
      <path d="M1030 660L1178 679" stroke="#0b0b0d" strokeWidth="2.500" strokeDasharray="8 2" />

      {/* side door */}
      <path d="M1199 684L1218 670V776L1199 790z" fill="#8d8490" stroke="#0b0b0d" strokeWidth="3" />
      <path d="M1202 690l7-5v88l-7 6z" fill="#702331" />
      <path d="M1197 704v12M1197 766v10" stroke="#000" strokeWidth="4" />
      <circle cx="1214" cy="726" r="4.500" fill="#b5b5ba" stroke="#000" strokeWidth="2" />
      <path d="M1215 726h6v8" stroke="#000" strokeWidth="2.500" fill="none" />

      {/* right frame */}
      <path d="M1284 613l18-1-18 18z" fill="#17cfe0" stroke="#0b0b0d" strokeWidth="1.500" />
      <path d="M1284 637L1223 689" stroke="#0b0b0d" strokeWidth="3" strokeDasharray="7 2" />
      <Bar p="M1296 616V824" w={11} c="#5f5f64" />
      <Chain p="M1223 755L1296 764" w={7} />
      <Bar p="M1223 764L1285 772" w={5} c="#55555a" />
      <Chain p="M1223 777L1272 784" w={7} />
      <Bar p="M1299 765L1196 866" w={12} c="#6c6c71" />
      <Caster x={1289} y={834} />

      {/* legs */}
      <Chain p="M1050 850L1190 868" w={9} />
      <Bar p="M1053 848V899" w={9} c="#606065" />
      <path d="M1057 895l8-4 6 5-8 5z" fill="#333" stroke="#000" strokeWidth="1.500" />
      <Bar p="M1190 865V914" w={9} c="#606065" />
      <Foot x={1187} y={914} />
      <Caster x={1027} y={812} />
      <ellipse cx="1058" cy="860" rx="4" ry="6" fill="#555" stroke="#000" strokeWidth="2" />
      <ellipse cx="1182" cy="876" rx="4" ry="6" fill="#555" stroke="#000" strokeWidth="2" />
      <Caster x={575} y={862} />
      <Caster x={607} y={834} />
      <Caster x={931} y={906} />
      <ellipse cx="574" cy="809" rx="5" ry="7" fill="#777" stroke="#000" strokeWidth="2" />
      <ellipse cx="695" cy="825" rx="5" ry="7" fill="#777" stroke="#000" strokeWidth="2" />
      <ellipse cx="933" cy="854" rx="6" ry="8" fill="#777" stroke="#000" strokeWidth="2" />

      <g className="font-['Open_Sans',sans-serif]" fill="#6b6b6b" fillOpacity=".3" fontSize="18">
        <text transform="translate(612 582) rotate(-45)">lizhiwen062020-10-12</text>
        <text transform="translate(1136 343) rotate(-45)">lizhiw</text>
        <text transform="translate(613 866) rotate(-45)">lizhiwen</text>
        <text transform="translate(874 886) rotate(-45)">lizhiwen</text>
        <text transform="translate(1136 905) rotate(-45)">lizhiw</text>
        <text transform="translate(1237 808) rotate(-45)">10</text>
      </g>
    </svg>
  );
}

function Watermark({ className }) {
  return (
    <div className={`absolute origin-bottom-left -rotate-45 whitespace-nowrap text-[23.500px] leading-[24px] tracking-[1.040px] text-[rgba(90,160,230,0.300)] pointer-events-none ${className}`}>
      2020-11-16, 14:49:24, 千玺, B2:68:DB:22:EF:94
    </div>
  );
}

function Cursor({ className }) {
  return (
    <svg viewBox="0 0 14 21" className={`absolute w-[14px] h-[21px] ${className}`}>
      <path d="M1 1v16l4-3.500 3 6.500 2.500-1.200L7.700 12.500H13z" fill="#fff" fillOpacity=".7" stroke="#333" strokeWidth="1.100" />
    </svg>
  );
}

export default function App() {
  return (
    <div className={`relative w-[1657px] h-[947px] overflow-hidden bg-black ${SANS}`}>
      <div className="ml-[23px] w-[1613px] h-full bg-white flex flex-col overflow-hidden">
        <BrowserChrome />
        <div className="flex flex-1 min-h-0">
          <Sidebar />
          <main className="flex-1 min-w-0 flex flex-col">
            <Header />
            <div className="flex flex-1 min-h-0">
              <div className="flex-1 min-w-0 overflow-hidden pl-[17px]">
                <h1 className="h-[76px] w-[1347px] pt-[1px] border-b border-[#e3e4e7] flex items-center justify-center text-[18.100px] text-[#66686c] whitespace-pre">
                  设备位置(门店)：碧桂园总部 设备编码：<span className="tracking-[-0.700px]">4643349593458833423</span> 设备名称：粉面机
                </h1>
                <div className="flex">
                  <Points title="左煮面区" rows={left} />
                  <Machine />
                  <Points title="右煮面区" rows={right} />
                </div>
              </div>
              <div className="w-[6px] shrink-0"><div className="h-[688px] rounded-full bg-[#b0b0b2]" /></div>
            </div>
          </main>
        </div>
      </div>

      <Cursor className="left-[1100px] top-[124px]" />
      <div className="absolute left-[42px] top-[568px] w-[166px] h-[46px] border-4 border-[#ff1d10] rounded-[5px]" />
      <div className="absolute left-[719px] top-[291px] text-[33.100px] leading-[40px] text-[#ff1d10] whitespace-nowrap">IO点开关量、模拟量、数值量</div>

      <div className="absolute inset-x-0 top-[610px] bottom-0 bg-[linear-gradient(to_bottom,rgba(0,0,0,0)_0px,rgba(0,0,0,0.080)_30px,rgba(0,0,0,0.270)_85px,rgba(0,0,0,0.450)_135px,rgba(0,0,0,0.550)_180px,rgba(0,0,0,0.600)_230px)]" />
      <Cursor className="left-[1532px] top-[681px]" />

      <div className="absolute left-[1512px] top-[46px] w-[27px] h-[19px] bg-[#ec5a54] rounded-[2px] text-white text-[12px] leading-[25px] text-center overflow-hidden">3.11</div>
      <div className="absolute left-[1568px] top-[43px] w-[16px] h-[16px] rounded-full bg-[#444]" />
      <div className="absolute left-[1605px] top-[44px] w-[14px] h-[14px] rounded-full bg-[#e23a2e]" />
      <div className="absolute left-[1485px] top-[24px] w-[172px] h-[32px] bg-[#222f39] border-t border-[#0d1419] shadow-[0_2px_6px_rgba(0,0,0,0.500)] text-[11.500px] leading-[31px] text-white pl-[11px]">说话:</div>
      <div className="absolute left-[1636px] top-[56px] w-[21px] h-[20px] bg-black" />
      <div className="absolute left-[1618px] top-0 w-[39px] h-[31px] bg-black"><div className="ml-[22px] mt-[10px] w-[12px] h-px bg-white" /></div>

      <div className="absolute inset-x-0 top-[901px] h-[3px] bg-white/20" />
      <div className="absolute left-0 top-[901px] w-[674px] h-[3px] bg-[#84a989]" />
      <div className="absolute left-[672px] top-[890px] w-[25px] h-[25px] rounded-full border-[2.500px] border-[#84b08a] bg-[#656565]" />
      <div className="absolute left-[2px] top-[782px] origin-left scale-x-[0.880] text-[42px] leading-[56px] font-light text-white whitespace-nowrap">014_104551</div>

      <div className="absolute left-[1170px] top-[919px] w-[487px] h-[28px] bg-[#111112] rounded-tl-[8px] overflow-hidden">
        <div className="flex items-start h-[60px] text-[#9b9b9b]">
          <div className="flex gap-[8px] ml-[25px] mt-[18px]"><i className="w-[4px] h-[18px] rounded-sm bg-[#8c8c8c]" /><i className="w-[4px] h-[18px] rounded-sm bg-[#8c8c8c]" /></div>
          <div className="ml-[25px] mt-[18px] w-[20px] h-[20px] rounded-[3px] bg-[#7e2a20]" />
          <div className="ml-[23px] mt-[9px] w-px h-[40px] bg-black" />
          <div className="ml-[28px] mt-[9px] w-[113px] text-[30px] leading-[32px] font-bold font-['Liberation_Mono',monospace] tracking-[-4px] text-[#a0a0a0] whitespace-nowrap">00:16:26</div>
          <div className="ml-[30px] mt-[9px] w-px h-[40px] bg-black" />
          <svg viewBox="0 0 22 22" className="ml-[26px] mt-[17px] w-[22px] h-[22px]" fill="none" stroke="currentColor" strokeWidth="2"><path d="M1 5V1h4M17 1h4v4M1 17v4h4M21 17v4h-4" /><circle cx="11" cy="10" r="6" /></svg>
          <svg viewBox="0 0 22 22" className="ml-[24px] mt-[17px] w-[22px] h-[22px]" fill="none" stroke="currentColor" strokeWidth="2"><path d="M1 6h6V0M21 6h-6V0M1 16h6v6M21 16h-6v6" /></svg>
          <svg viewBox="0 0 22 20" className="ml-[24px] mt-[17px] w-[22px] h-[20px]"><path d="M0 5a2 2 0 0 1 2-2h4l2-3h6l2 3h4a2 2 0 0 1 2 2v13H0z" fill="#9b9b9b" /><circle cx="11" cy="10" r="4.500" fill="#111" stroke="#ddd" strokeWidth="1" /></svg>
          <svg viewBox="0 0 22 22" className="ml-[24px] mt-[17px] w-[22px] h-[22px]" stroke="#9b9b9b" strokeWidth="4" strokeLinecap="round"><path d="M19 2L6 15" /></svg>
        </div>
      </div>

      <Watermark className="left-[710px] top-[386px]" />
      <Watermark className="left-[-120px] top-[552px]" />
      <Watermark className="left-[710px] top-[1048px]" />
      <Watermark className="left-[-120px] top-[1215px]" />
      <Watermark className="left-[1535px] top-[219px]" />
      <Watermark className="left-[1535px] top-[884px]" />
    </div>
  );
}
